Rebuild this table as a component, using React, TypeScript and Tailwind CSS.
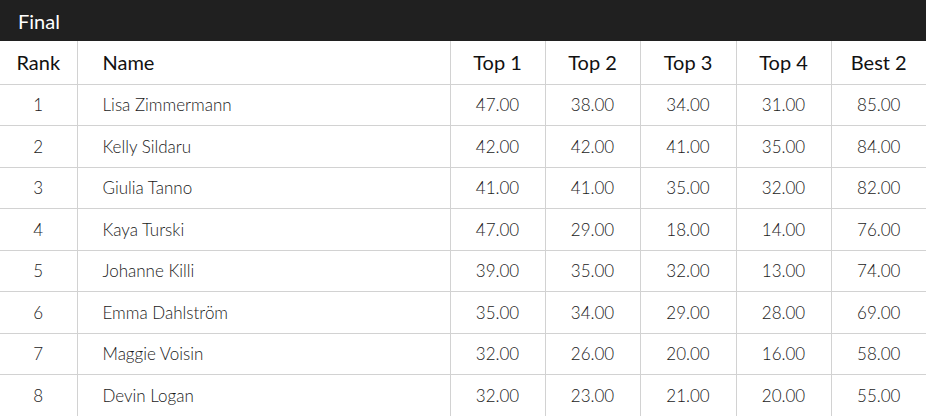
import React from 'react';

const rows = [
    { rank: 1, name: 'Lisa Zimmermann', t1: '47.00', t2: '38.00', t3: '34.00', t4: '31.00', best: '85.00' },
    { rank: 2, name: 'Kelly Sildaru', t1: '42.00', t2: '42.00', t3: '41.00', t4: '35.00', best: '84.00' },
    { rank: 3, name: 'Giulia Tanno', t1: '41.00', t2: '41.00', t3: '35.00', t4: '32.00', best: '82.00' },
    { rank: 4, name: 'Kaya Turski', t1: '47.00', t2: '29.00', t3: '18.00', t4: '14.00', best: '76.00' },
    { rank: 5, name: 'Johanne Killi', t1: '39.00', t2: '35.00', t3: '32.00', t4: '13.00', best: '74.00' },
    { rank: 6, name: 'Emma Dahlström', t1: '35.00', t2: '34.00', t3: '29.00', t4: '28.00', best: '69.00' },
    { rank: 7, name: 'Maggie Voisin', t1: '32.00', t2: '26.00', t3: '20.00', t4: '16.00', best: '58.00' },
    { rank: 8, name: 'Devin Logan', t1: '32.00', t2: '23.00', t3: '21.00', t4: '20.00', best: '55.00' },
];

export default function App() {
    return (
        <div className="w-[926px] h-[416px] overflow-hidden bg-white font-['Lato',sans-serif]">
            <div className="h-[41px] bg-[#202020] flex items-center px-[18px] text-white text-[20px] font-normal">
                Final
            </div>
            <table className="w-full table-fixed border-collapse">
                <colgroup>
                    <col className="w-[77px]" />
                    <col className="w-[373px]" />
                    <col className="w-[95px]" />
                    <col className="w-[95px]" />
                    <col className="w-[96px]" />
                    <col className="w-[95px]" />
                    <col className="w-[95px]" />
                </colgroup>
                <thead>
                    <tr className="h-[43px] text-[20px] text-[#111] border-b border-[#d2d2d2]">
                        <th className="text-center font-normal">Rank</th>
                        <th className="text-left pl-[25px] font-normal border-l border-[#d2d2d2]">Name</th>
                        <th className="text-center font-normal border-l border-[#d2d2d2]">Top 1</th>
                        <th className="text-center font-normal border-l border-[#d2d2d2]">Top 2</th>
                        <th className="text-center font-normal border-l border-[#d2d2d2]">Top 3</th>
                        <th className="text-center font-normal border-l border-[#d2d2d2]">Top 4</th>
                        <th className="text-center font-normal border-l border-[#d2d2d2]">Best 2</th>
                    </tr>
                </thead>
                <tbody className="text-[17px] font-light text-[#1a1a1a]">
                    {rows.map((r) => (
                        <tr key={r.rank} className="h-[41.5px] border-b border-[#d2d2d2]">
                            <td className="text-center">{r.rank}</td>
                            <td className="text-left pl-[25px] border-l border-[#d2d2d2]">{r.name}</td>
                            <td className="text-center border-l border-[#d2d2d2]">{r.t1}</td>
                            <td className="text-center border-l border-[#d2d2d2]">{r.t2}</td>
                            <td className="text-center border-l border-[#d2d2d2]">{r.t3}</td>
                            <td className="text-center border-l border-[#d2d2d2]">{r.t4}</td>
                            <td className="text-center border-l border-[#d2d2d2]">{r.best}</td>
                        </tr>
                    ))}
                </tbody>
            </table>
        </div>
    );
}
